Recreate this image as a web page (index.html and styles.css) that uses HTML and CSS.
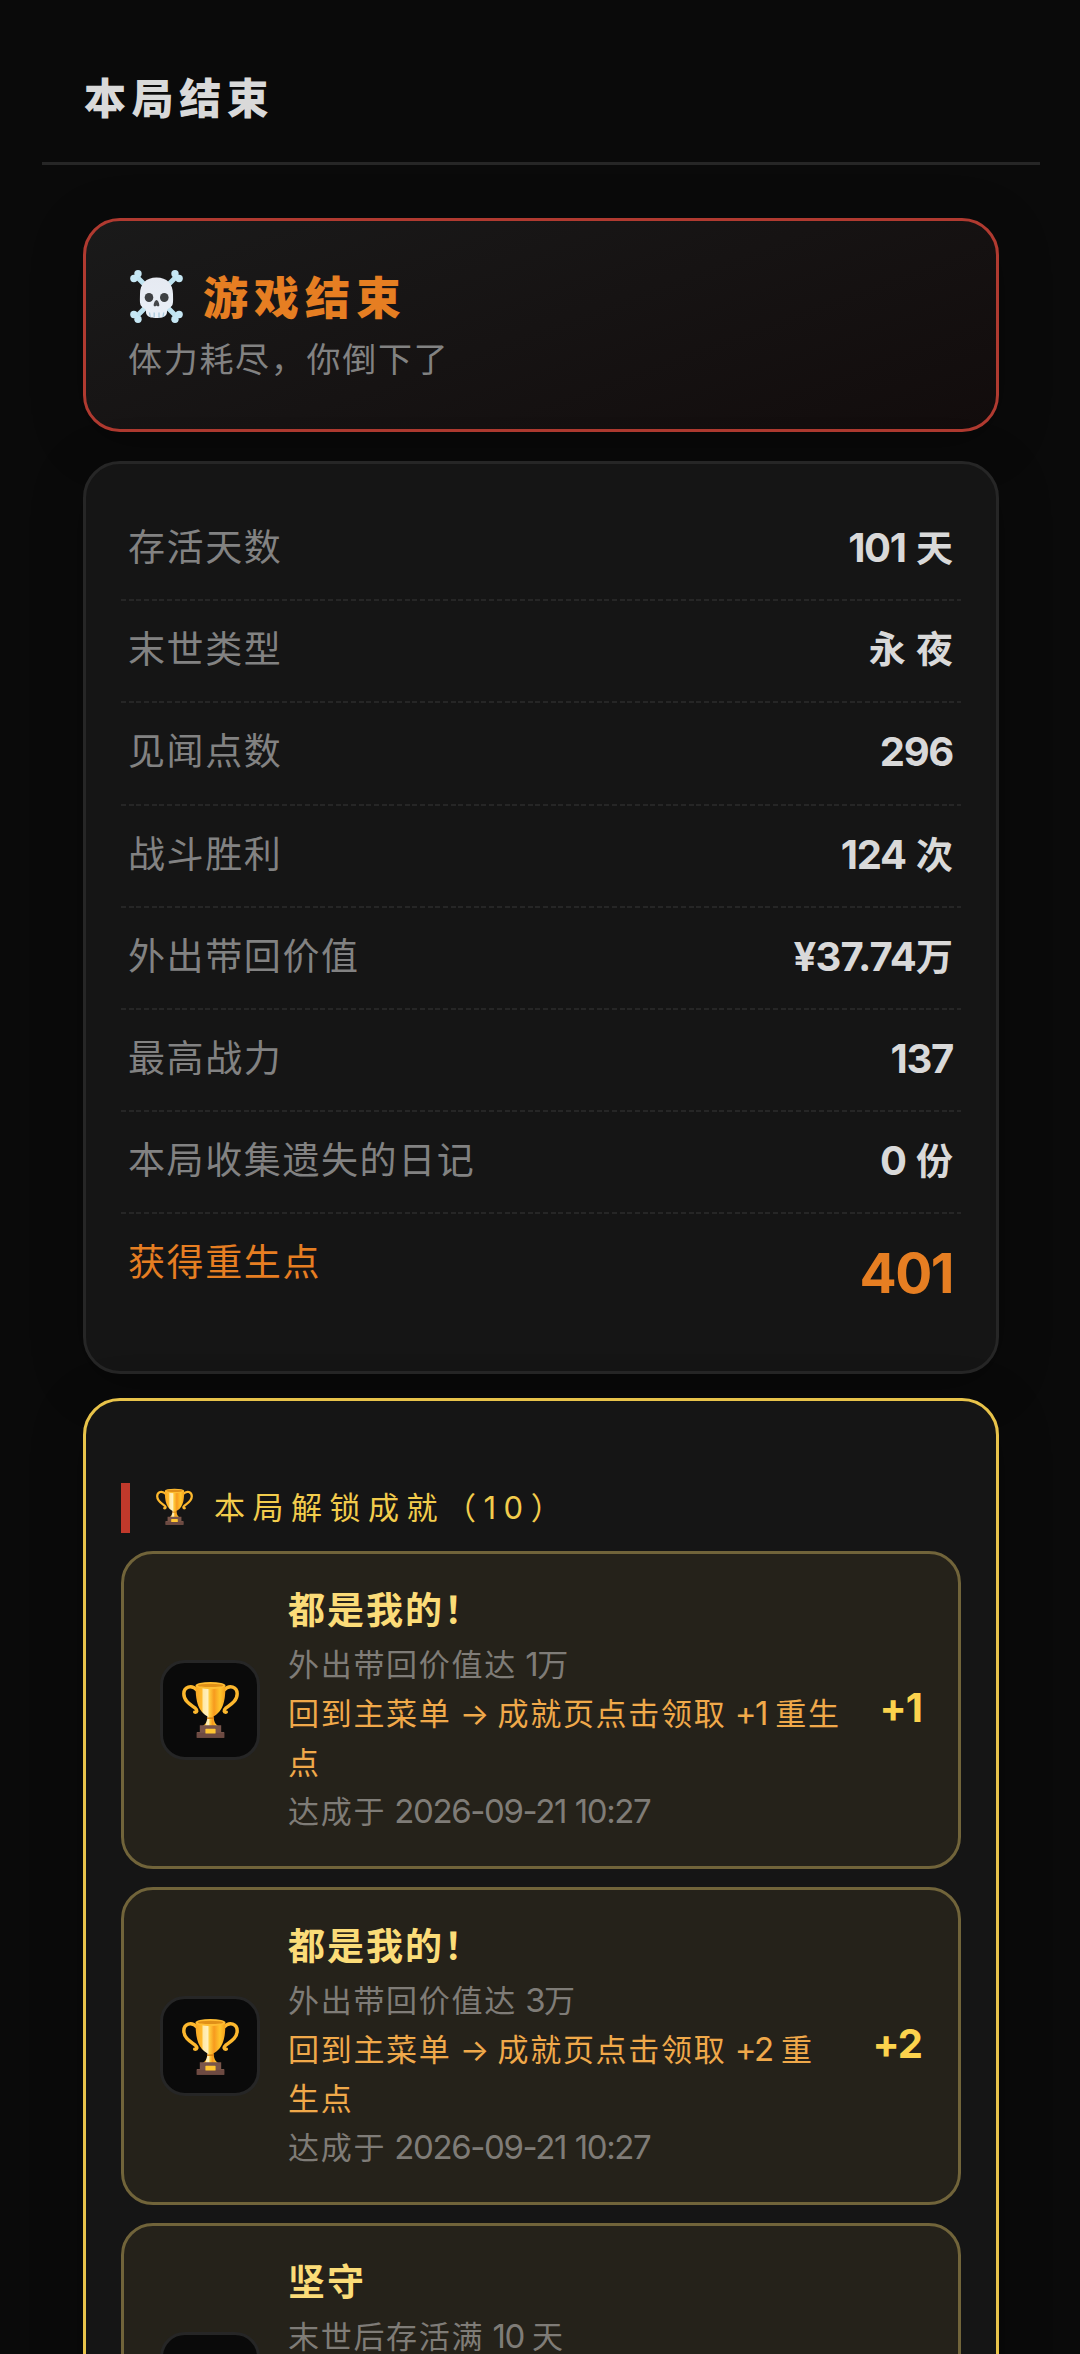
FILE: index.html
```html
<!DOCTYPE html>
<html lang="zh-CN">
<head>
<meta charset="utf-8">
<title>本局结束</title>
<link rel="stylesheet" href="styles.css">
</head>
<body>
<svg class="sprite" aria-hidden="true">
  <defs>
    <linearGradient id="cup-gold" x1="0" x2="1" y1="0" y2="0">
      <stop offset="0" stop-color="#f9a825"/>
      <stop offset=".2" stop-color="#ffb92c"/>
      <stop offset=".26" stop-color="#ffe9a6"/>
      <stop offset=".4" stop-color="#fff0bd"/>
      <stop offset=".47" stop-color="#ffca3a"/>
      <stop offset=".62" stop-color="#f79a1e"/>
      <stop offset=".82" stop-color="#ffc52c"/>
      <stop offset="1" stop-color="#f5a01c"/>
    </linearGradient>
    <linearGradient id="skull-bone" x1="0" x2="0" y1="0" y2="1">
      <stop offset="0" stop-color="#e6eaf2"/>
      <stop offset="1" stop-color="#e9eff7"/>
    </linearGradient>
    <symbol id="trophy" viewBox="0 0 56 56">
      <g fill="none" stroke="#fdb82e" stroke-width="3.4" stroke-linecap="round">
        <path d="M15 9C9 3 1.8 6 1.8 12.500c0 7.500 7 11 11.500 14.500 2.200 1.800 1.500 4-.8 3.600"/>
        <path d="M41 9c6-6 13.200-3 13.200 3.500 0 7.500-7 11-11.500 14.500-2.200 1.800-1.500 4 .8 3.600"/>
      </g>
      <path d="M25 34h6c.2 6 1.500 8.500 5.500 11h-17c4-2.500 5.300-5 5.500-11z" fill="url(#cup-gold)"/>
      <path d="M13.500 4.500C13 20 16 32 28 36c12-4 15-16 14.500-31.500z" fill="url(#cup-gold)"/>
      <ellipse cx="28" cy="4.500" rx="14.700" ry="3.500" fill="#ffbd32"/>
      <ellipse cx="28" cy="4.300" rx="12.500" ry="1.700" fill="#e09018"/>
      <path d="M24.500 36.500h7" stroke="#d88312" stroke-width="1.500"/>
      <path d="M17.500 43.500h21v6.500h3v5.700H14.500V50h3z" fill="#79554a"/>
      <path d="M14.500 51h27v4.700h-27z" fill="#6d4a42"/>
      <rect x="23" y="47" width="10" height="4.600" rx=".6" fill="#ffc532"/>
    </symbol>
    <symbol id="skull" viewBox="0 0 53 53">
      <g stroke="#bfe3f0" stroke-width="5" stroke-linecap="round">
        <path d="M7 7l39 39M46 7L7 46"/>
      </g>
      <g fill="#c6e7f4">
        <circle cx="8" cy="3.800" r="3.700"/><circle cx="3.900" cy="8.500" r="3.700"/>
        <circle cx="45" cy="3.800" r="3.700"/><circle cx="49.100" cy="8.500" r="3.700"/>
        <circle cx="3.900" cy="44.500" r="3.700"/><circle cx="8" cy="49.200" r="3.700"/>
        <circle cx="49.100" cy="44.500" r="3.700"/><circle cx="45" cy="49.200" r="3.700"/>
      </g>
      <path d="M26.500 7.500c10.500 0 16.500 6.500 16.500 16.500 0 4 .4 7.500-.4 10.500-.9 3-4.600 3.500-5.400 5.500-.5 1.500.2 3-1 4.800-2 3-5.700 3.200-9.700 3.200s-7.700-.2-9.700-3.200c-1.200-1.800-.5-3.300-1-4.800-.8-2-4.500-2.500-5.400-5.500-.8-3-.4-6.500-.4-10.500 0-10 6-16.500 16.500-16.500z" fill="url(#skull-bone)"/>
      <ellipse cx="19" cy="27.500" rx="4.300" ry="4.500" fill="#3d4043"/>
      <ellipse cx="34.300" cy="27.500" rx="4.300" ry="4.500" fill="#3d4043"/>
      <path d="M26.500 30c1.600 0 3 4 2.800 5.500-.2 1.200-2 1.100-2.800 0-.8 1.100-2.600 1.200-2.800 0-.2-1.500 1.200-5.500 2.800-5.500z" fill="#45474a"/>
      <path d="M19.500 42.500l.7 4.500M24.200 42.500v5M29 42.500v5M33.700 42.500L33 47" stroke="#a9c9dc" stroke-width="1.300" fill="none"/>
    </symbol>
  </defs>
</svg>

<header class="topbar"><h1 class="topbar-title">本局结束</h1></header>

<main class="content">
  <section class="card ending">
    <h2 class="ending-title"><svg class="ending-icon"><use href="#skull"/></svg>游戏结束</h2>
    <p class="ending-text">体力耗尽，你倒下了</p>
  </section>

  <section class="card stats">
    <div class="stat"><span class="stat-label">存活天数</span><span class="stat-value"><span class="num">101</span> 天</span></div>
    <div class="stat"><span class="stat-label">末世类型</span><span class="stat-value">永 夜</span></div>
    <div class="stat"><span class="stat-label">见闻点数</span><span class="stat-value"><span class="num">296</span></span></div>
    <div class="stat"><span class="stat-label">战斗胜利</span><span class="stat-value"><span class="num">124</span> 次</span></div>
    <div class="stat"><span class="stat-label">外出带回价值</span><span class="stat-value"><span class="num num-money">¥37.74</span>万</span></div>
    <div class="stat"><span class="stat-label">最高战力</span><span class="stat-value"><span class="num">137</span></span></div>
    <div class="stat"><span class="stat-label">本局收集遗失的日记</span><span class="stat-value"><span class="num">0</span> 份</span></div>
    <div class="stat stat-total"><span class="stat-label">获得重生点</span><span class="stat-value">401</span></div>
  </section>

  <section class="card unlocked">
    <h3 class="unlocked-title"><svg class="unlocked-icon"><use href="#trophy"/></svg><span class="unlocked-text">本局解锁成就（10）</span></h3>

    <article class="achievement">
      <div class="badge"><svg class="badge-icon"><use href="#trophy"/></svg></div>
      <div class="info">
        <h4 class="name">都是我的！</h4>
        <p class="line">外出带回价值达 <span class="digits">1</span>万</p>
        <p class="line claim">回到主菜单 <span class="arrow">→</span> 成就页点击领取 <span class="digits">+1</span> 重生<br>点</p>
        <p class="line">达成于 <span class="digits">2026-09-21 10:27</span></p>
      </div>
      <strong class="reward">+1</strong>
    </article>

    <article class="achievement">
      <div class="badge"><svg class="badge-icon"><use href="#trophy"/></svg></div>
      <div class="info">
        <h4 class="name">都是我的！</h4>
        <p class="line">外出带回价值达 <span class="digits">3</span>万</p>
        <p class="line claim">回到主菜单 <span class="arrow">→</span> 成就页点击领取 <span class="digits">+2</span> 重<br>生点</p>
        <p class="line">达成于 <span class="digits">2026-09-21 10:27</span></p>
      </div>
      <strong class="reward">+2</strong>
    </article>

    <article class="achievement">
      <div class="badge"></div>
      <div class="info">
        <h4 class="name">坚守</h4>
        <p class="line">末世后存活满 <span class="digits">10</span> 天</p>
      </div>
    </article>
  </section>
</main>
</body>
</html>
```
FILE: styles.css
```css
* {
  box-sizing: border-box;
}

body {
  margin: 0;
  height: 2354px;
  overflow: hidden;
  background: #0a0a0a;
  color: #d9d9d9;
  font-family: Inter, "Noto Sans CJK SC", sans-serif;
}

h1, h2, h3, h4, p {
  margin: 0;
}

.sprite {
  position: absolute;
  width: 0;
  height: 0;
}

.topbar {
  height: 165px;
  margin: 0 40px 0 42px;
  padding: 69px 42px 0;
  border-bottom: 3px solid #262626;
}

.topbar-title {
  font-size: 42px;
  line-height: 60px;
  font-weight: 800;
  letter-spacing: 5.600px;
}

.content {
  padding: 53px 81px 0 83px;
}

.card {
  border: 3px solid #262626;
  border-radius: 37px;
  background: #151515;
  box-shadow: 0 10px 52px rgba(0, 0, 0, .25);
}

.ending {
  height: 214px;
  padding: 41px 42px 0;
  border-color: #b03a30;
  background: linear-gradient(160deg, #1a1a1a, #120c0c);
}

.ending-title {
  display: flex;
  align-items: center;
  height: 66px;
  color: #e67e22;
  font-size: 45px;
  font-weight: 800;
  letter-spacing: 6px;
}

.ending-icon {
  width: 53px;
  height: 53px;
  margin: 3px 20px 0 2px;
}

.ending-text {
  margin-top: 4px;
  color: #828282;
  font-size: 34px;
  line-height: 56px;
  letter-spacing: 1.700px;
}

.stats {
  height: 913px;
  margin-top: 29px;
  padding: 35px 35px 0;
}

.stat {
  display: flex;
  justify-content: space-between;
  height: 102.200px;
  padding: 21px 8px 0 7px;
  background: repeating-linear-gradient(90deg, #262626 0 5px, transparent 5px 7.670px) bottom / 100% 2px no-repeat;
}

.stat-label {
  color: #828282;
  font-size: 37px;
  line-height: 56px;
  letter-spacing: 1.600px;
}

.stat-value {
  font-size: 37px;
  line-height: 56px;
  font-weight: 700;
  word-spacing: 1.500px;
}

.num {
  font-size: 40px;
  letter-spacing: -1.300px;
}

.num-money {
  letter-spacing: -.8px;
}

.stat-total {
  background: none;
}

.stat-total .stat-label {
  color: #e67e22;
}

.stat-total .stat-value {
  color: #e67e22;
  font-size: 55px;
  line-height: 76px;
  letter-spacing: -1.500px;
}

.unlocked {
  height: 1100px;
  margin-top: 24px;
  padding: 82px 35px 0;
  border-color: #e8c34a;
}

.unlocked-title {
  display: flex;
  align-items: center;
  height: 50px;
  margin-bottom: 17.500px;
  padding-left: 26px;
  border-left: 9px solid #c0392b;
  color: #f2cc4c;
  font-size: 31px;
  font-weight: 400;
  letter-spacing: 7.500px;
}

.unlocked-icon {
  width: 37px;
  height: 37px;
  margin: 0 21px 3px 0;
}

.unlocked-text {
  padding-bottom: 6px;
}

.achievement {
  display: flex;
  align-items: center;
  height: 318.500px;
  margin-bottom: 17.800px;
  padding: 0 36px;
  border: 3px solid #71643a;
  border-radius: 32px;
  background: #25221a;
}

.badge {
  display: grid;
  place-items: center;
  width: 100px;
  height: 100px;
  flex: none;
  border: 3px solid #262626;
  border-radius: 25px;
  background: #0a0a0a;
}

.badge-icon {
  width: 57px;
  height: 57px;
}

.info {
  flex: 1;
  height: 254px;
  margin: -2px 0 0 28px;
  white-space: nowrap;
}

.name {
  color: #fbdc78;
  font-size: 37px;
  line-height: 58px;
  font-weight: 700;
  letter-spacing: 2px;
}

.line {
  color: #7f7c77;
  font-size: 31px;
  line-height: 49px;
  letter-spacing: 1.700px;
  word-spacing: -2.200px;
}

.claim {
  color: #f0a94a;
}

.digits {
  font-size: 33px;
  letter-spacing: -1.400px;
  word-spacing: 1px;
}

.arrow {
  letter-spacing: 0;
}

.reward {
  margin-bottom: 4px;
  color: #fcd34d;
  font-size: 40px;
  line-height: 50px;
  letter-spacing: -1px;
}
```
